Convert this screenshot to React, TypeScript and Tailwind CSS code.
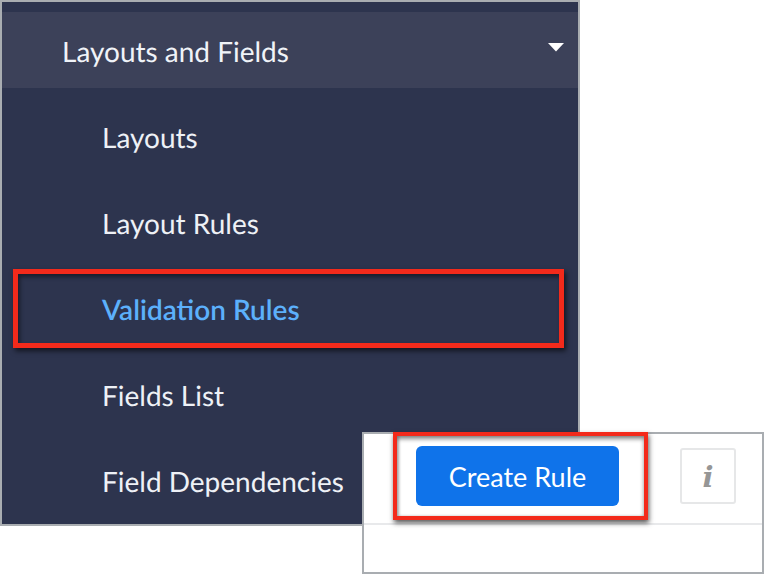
export default function App() {
  const items = [
    { label: "Layouts" },
    { label: "Layout Rules" },
    { label: "Validation Rules", active: true },
    { label: "Fields List" },
    { label: "Field Dependencies" },
  ];
  return (
    <div className="relative w-[768px] h-[576px] overflow-hidden bg-white font-['Lato',sans-serif] [font-variant-ligatures:common-ligatures] [text-rendering:geometricPrecision]">
      <div className="w-[580px] h-[526px] border-2 border-[#a9adb1] bg-[#2d344e] pt-[10px]">
        <div className="flex h-[76px] items-center justify-between bg-[#3c4159] pl-[60px] pr-[14px]">
          <span className="text-[28px] leading-none text-[#f0f3f8] relative top-[1px]">Layouts and Fields</span>
          <svg width="16" height="9" viewBox="0 0 16 9" className="relative top-[-3px]">
            <polygon points="0,0 16,0 8,8.5" fill="#ffffff" />
          </svg>
        </div>
        <div className="flex flex-col">
          {items.map((it) => (
            <div
              key={it.label}
              className={`flex h-[86px] items-center pl-[100px] pt-[12px] text-[28px] leading-none ${it.active ? "font-semibold text-[#5cb0fb]" : "text-[#eef1f6]"}`}
            >
              {it.label}
            </div>
          ))}
        </div>
      </div>

      <div className="absolute left-[13px] top-[269px] w-[551px] h-[79px] border-[5px] border-[#f32a1b] shadow-[2px_3px_5px_rgba(0,0,0,0.6),inset_2px_3px_4px_rgba(0,0,0,0.45)]" />

      <div className="absolute left-[362px] top-[432px] w-[402px] h-[142px] border-2 border-[#a9adb1] bg-white">
        <div className="flex h-[91px] items-start border-b-2 border-[#e8e9eb] pl-[52px] pt-[12px]">
          <button className="flex h-[60px] w-[203px] items-center justify-center rounded-[6px] bg-[#0f73ea] text-[27px] leading-none text-white">
            Create Rule
          </button>
          <div className="ml-[61px] mt-[2px] flex h-[56px] w-[56px] items-center justify-center rounded-[3px] border-2 border-[#e6e7e8] pt-[3px] font-['DejaVu_Serif',serif] text-[29px] font-bold italic leading-none text-[#969696]">
            i
          </div>
        </div>
      </div>

      <div className="absolute left-[393px] top-[432px] w-[255px] h-[88px] border-[4px] border-[#f32a1b] shadow-[1px_3px_5px_rgba(0,0,0,0.65),inset_0_3px_4px_rgba(0,0,0,0.45),inset_2px_0_3px_rgba(0,0,0,0.2)]" />
    </div>
  );
}
